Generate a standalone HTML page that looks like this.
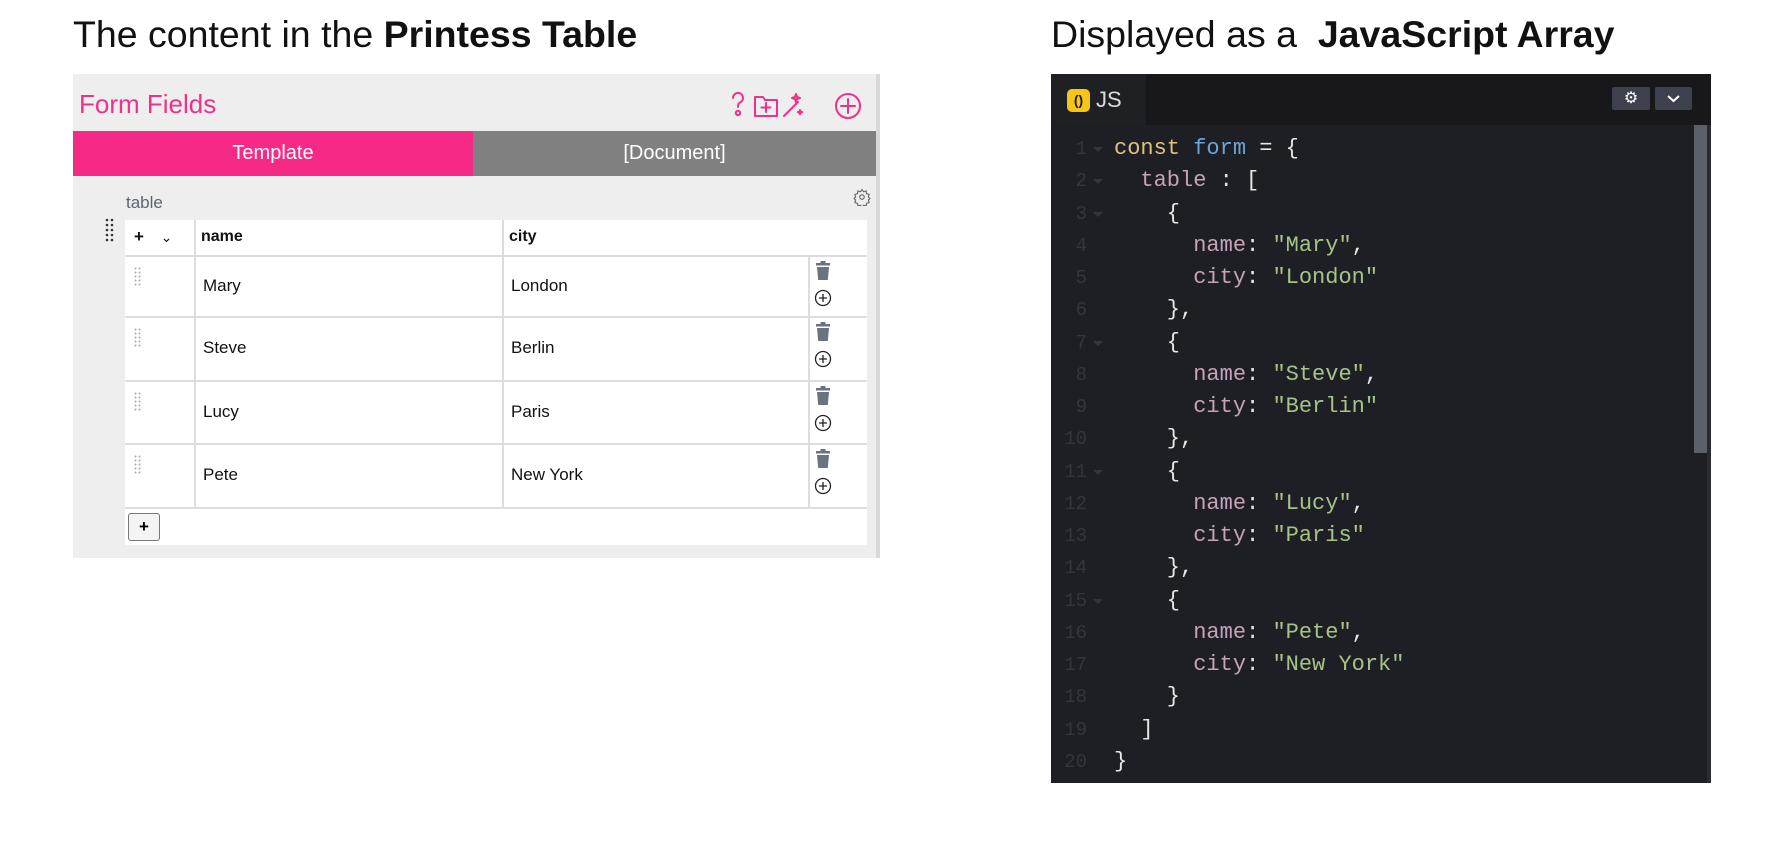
<!DOCTYPE html>
<html><head><meta charset="utf-8"><style>
*{margin:0;padding:0;box-sizing:border-box}
body{width:1788px;height:862px;background:#fff;position:relative;overflow:hidden;font-family:"Liberation Sans",sans-serif}
.abs{position:absolute}
.title{font-size:37.5px;color:#111;white-space:nowrap;top:13px}
.panel{left:73px;top:74px;width:807px;height:484px;background:#eeeeee;border-right:4px solid #d8d8d8}
.ff{left:6px;top:15px;font-size:26px;color:#f0308a}
.tab{top:57px;height:45px;color:#fff;font-size:20px;text-align:center;line-height:45px}
.tbl{left:52px;top:146px;width:742px;background:#fff}
.row{position:absolute;left:0;width:742px;border-top:2px solid #ddd}
.cell{position:absolute;top:0;bottom:0;border-left:2px solid #ddd;font-size:17px;color:#111}
.code{left:1051px;top:74px;width:660px;height:709px;background:#1e1f24}
.ln{position:absolute;left:0;width:36px;text-align:right;color:#34363c;font-family:"Liberation Mono",monospace;font-size:19px}
.cl{position:absolute;left:63px;font-family:"Liberation Mono",monospace;font-size:22px;color:#e6e6e6;white-space:pre}
.k{color:#dcc47e}.v{color:#6fa3d6}.p{color:#c4a3bb}.s{color:#a6c48a}
.fold{position:absolute;left:42px;width:0;height:0;border-left:5px solid transparent;border-right:5px solid transparent;border-top:5px solid #34363c}
</style></head><body>
<div class="abs title" style="left:73px">The content in the <b>Printess Table</b></div>
<div class="abs title" style="left:1051px">Displayed as a&nbsp; <b>JavaScript Array</b></div>

<div class="abs panel">
 <div class="abs ff">Form Fields</div>
 <svg class="abs" style="left:655px;top:14px" width="140" height="34" viewBox="0 0 140 34" fill="none" stroke="#f0308a" stroke-width="2" stroke-linecap="round" stroke-linejoin="round">
  <path d="M5 10a5 5 0 1 1 7 4.5c-2 1-2 2.5-2 4.5"/><circle cx="10" cy="25" r="2.2"/>
  <path d="M27 9h8l2 3h12v16H27z"/><path d="M38 15v9M33.5 19.5h9"/>
  <path d="M56 28l14-14"/><path d="M68 6l1 3 3 1-3 1-1 3-1-3-3-1 3-1z"/><path d="M72 22l.6 1.5 1.5.6-1.5.6-.6 1.5-.6-1.5-1.5-.6 1.5-.6z"/>
  <circle cx="120" cy="18" r="12"/><path d="M120 11v14M113 18h14"/>
 </svg>
 <div class="abs tab" style="left:0;width:400px;background:#f52a86">Template</div>
 <div class="abs tab" style="left:400px;width:403px;background:#808080">[Document]</div>
 <div class="abs" style="left:53px;top:119px;font-size:17px;color:#5b6470">table</div>
 <svg class="abs" style="left:780px;top:114px" width="18" height="18" viewBox="0 0 24 24" fill="none" stroke="#666" stroke-width="1.5"><circle cx="12" cy="12" r="3"/><path d="M12 2l2 3 3.5-1 .5 3.5 3.5 1-1 3.5 2 2-2 2 1 3.5-3.5 1-.5 3.5-3.5-1-2 3-2-3-3.5 1-.5-3.5-3.5-1 1-3.5-2-2 2-2-1-3.5 3.5-1 .5-3.5 3.5 1z"/></svg>
 <svg class="abs" style="left:32px;top:144px" width="10" height="24"><g fill="#333"><circle cx="2" cy="2" r="1.3"/><circle cx="7" cy="2" r="1.3"/><circle cx="2" cy="7" r="1.3"/><circle cx="7" cy="7" r="1.3"/><circle cx="2" cy="12" r="1.3"/><circle cx="7" cy="12" r="1.3"/><circle cx="2" cy="17" r="1.3"/><circle cx="7" cy="17" r="1.3"/><circle cx="2" cy="22" r="1.3"/><circle cx="7" cy="22" r="1.3"/></g></svg>
 <div class="abs tbl" style="height:325px">
  <div class="row" style="top:0;height:35px;border-top:none">
   <div class="cell" style="left:0;border-left:none;width:69px;font-weight:bold;line-height:33px;padding-left:9px">+ <span style="font-weight:normal;margin-left:12px;font-size:14px">&#8964;</span></div>
   <div class="cell" style="left:69px;width:308px;font-weight:bold;padding:8px 0 0 5px;font-size:16px">name</div>
   <div class="cell" style="left:377px;width:306px;font-weight:bold;padding:8px 0 0 5px;font-size:16px">city</div>
  </div>
  <div id="rows"></div>
 </div>
</div>

<div class="abs code">
 <div class="abs" style="left:0;top:0;width:660px;height:51px;background:#18181a"></div>
 <div class="abs" style="left:0;top:0;width:95px;height:51px;background:#1f2023"></div>
 <div class="abs" style="left:16px;top:15px;width:23px;height:23px;border-radius:5px;background:#f5c518;color:#1a1a1a;font-size:14px;font-weight:bold;text-align:center;line-height:23px">()</div>
 <div class="abs" style="left:45px;top:13px;color:#ddd;font-size:22px">JS</div>
 <div class="abs" style="left:561px;top:13px;width:38px;height:23px;background:#3d414d;border-radius:2px;color:#fff;text-align:center;font-size:16px;line-height:23px">&#9881;</div>
 <div class="abs" style="left:604px;top:13px;width:37px;height:23px;background:#3d414d;border-radius:2px"><svg width="37" height="23"><path d="M13 9l5.5 5 5.5-5" stroke="#fff" stroke-width="2" fill="none"/></svg></div>
 <div class="abs" style="left:643px;top:51px;width:13px;height:328px;background:#5c606b"></div>
 <div class="abs" style="left:656px;top:51px;width:4px;height:658px;background:#2a2b30"></div>
 <div id="code"></div>
</div>

<script>
var names=[["Mary","London"],["Steve","Berlin"],["Lucy","Paris"],["Pete","New York"]];
var tops=[35,96,160,223],h="";
names.forEach(function(n,i){
 var t=tops[i],hh=(i<3?tops[i+1]:287)-t;
 h+='<div class="row" style="top:'+t+'px;height:'+hh+'px">'+
 '<div class="cell" style="left:0;border-left:none;width:69px"><svg style="position:absolute;left:9px;top:10px" width="8" height="20"><g fill="#aaa">'+
 [0,4,8,12,16].map(function(y){return '<circle cx="1.5" cy="'+(y+1.5)+'" r="1"/><circle cx="5.5" cy="'+(y+1.5)+'" r="1"/>'}).join('')+'</g></svg></div>'+
 '<div class="cell" style="left:69px;width:308px;padding:'+(hh/2-12)+'px 0 0 7px">'+n[0]+'</div>'+
 '<div class="cell" style="left:377px;width:306px;padding:'+(hh/2-12)+'px 0 0 7px">'+n[1]+'</div>'+
 '<div class="cell" style="left:683px;width:59px"><svg style="position:absolute;left:3px;top:3px" width="22" height="50"><rect x="3" y="3" width="14" height="2.5" fill="#6b7280"/><rect x="7.5" y="1" width="5" height="2.5" fill="#6b7280"/><path d="M4 7h12l-1.2 13H5.2z" fill="#6b7280"/><circle cx="10" cy="38" r="7.5" fill="none" stroke="#222" stroke-width="1.3"/><path d="M10 34v8M6 38h8" stroke="#222" stroke-width="1.3"/></svg></div></div>';
});
h+='<div class="row" style="top:287px;height:38px"><div style="position:absolute;left:3px;top:4px;width:32px;height:28px;border:1.5px solid #777;border-radius:3px;background:#f4f4f4;text-align:center;line-height:25px;font-weight:bold;font-size:17px">+</div></div>';
document.getElementById('rows').innerHTML=h;
var L=['<span class="k">const</span> <span class="v">form</span> = {','  <span class="p">table</span> : [','    {','      <span class="p">name</span>: <span class="s">"Mary"</span>,','      <span class="p">city</span>: <span class="s">"London"</span>','    },','    {','      <span class="p">name</span>: <span class="s">"Steve"</span>,','      <span class="p">city</span>: <span class="s">"Berlin"</span>','    },','    {','      <span class="p">name</span>: <span class="s">"Lucy"</span>,','      <span class="p">city</span>: <span class="s">"Paris"</span>','    },','    {','      <span class="p">name</span>: <span class="s">"Pete"</span>,','      <span class="p">city</span>: <span class="s">"New York"</span>','    }','  ]','}'];
var folds=[1,2,3,7,11,15],c="";
L.forEach(function(l,i){var cy=75+i*32.25;
 c+='<div class="ln" style="top:'+(cy-11)+'px">'+(i+1)+'</div>';
 if(folds.indexOf(i+1)>=0)c+='<div class="fold" style="top:'+(cy-2)+'px"></div>';
 c+='<div class="cl" style="top:'+(cy-13)+'px">'+l+'</div>';});
document.getElementById('code').innerHTML=c;
</script>
</body></html>
